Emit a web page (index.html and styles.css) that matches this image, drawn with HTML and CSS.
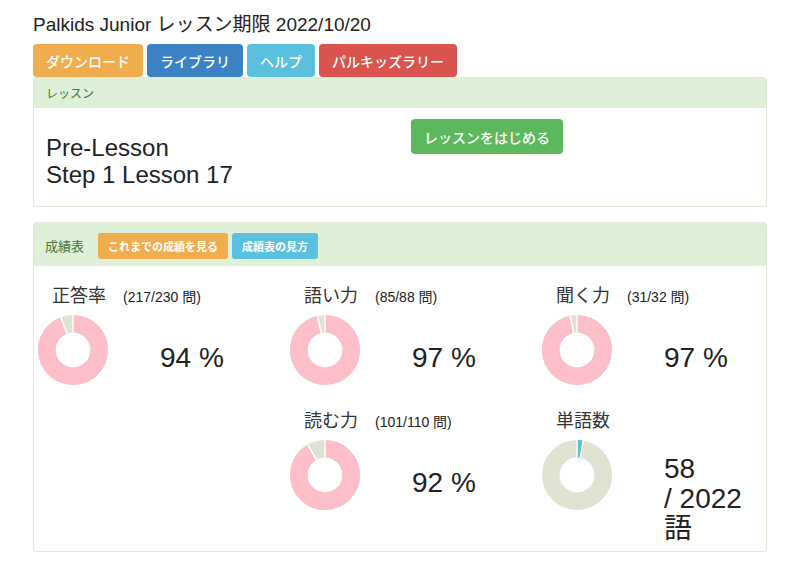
FILE: index.html
```html
<!DOCTYPE html>
<html lang="ja">
<head>
    <meta charset="UTF-8">
    <meta name="viewport" content="width=device-width, initial-scale=1.0">
    <title>Palkids Junior</title>
    <link rel="stylesheet" href="styles.css">
</head>
<body>
    <div class="page">
        <h1 class="title">Palkids Junior レッスン期限 2022/10/20</h1>
        <div class="menu">
            <button class="btn btn-orange">ダウンロード</button>
            <button class="btn btn-blue">ライブラリ</button>
            <button class="btn btn-teal">ヘルプ</button>
            <button class="btn btn-red">パルキッズラリー</button>
        </div>

        <section class="panel">
            <div class="panel-heading">レッスン</div>
            <div class="lesson-body">
                <div class="lesson-name">Pre-Lesson<br>Step 1 Lesson 17</div>
                <div>
                    <button class="btn btn-green">レッスンをはじめる</button>
                </div>
            </div>
        </section>

        <section class="panel score-panel">
            <div class="panel-heading score-heading">
                <span>成績表</span>
                <button class="btn-small btn-orange">これまでの成績を見る</button>
                <button class="btn-small btn-teal">成績表の見方</button>
            </div>
            <div class="score-grid">
                <div class="score">
                    <div class="score-label">正答率<span class="score-count">(217/230 問)</span></div>
                    <div class="score-row">
                        <svg class="donut" viewBox="0 0 70 70" width="70" height="70">
                            <circle class="donut-rest" cx="35" cy="35" r="26.25"/>
                            <circle class="donut-part" cx="35" cy="35" r="26.25" pathLength="100" stroke-dasharray="94.35 100" transform="rotate(-90 35 35)"/>
                            <line class="donut-gap" x1="35" y1="17.5" x2="35" y2="0"/>
                            <line class="donut-gap" x1="28.93" y1="18.59" x2="22.86" y2="2.17"/>
                        </svg>
                        <div class="score-value">94 %</div>
                    </div>
                </div>
                <div class="score">
                    <div class="score-label">語い力<span class="score-count">(85/88 問)</span></div>
                    <div class="score-row">
                        <svg class="donut" viewBox="0 0 70 70" width="70" height="70">
                            <circle class="donut-rest" cx="35" cy="35" r="26.25"/>
                            <circle class="donut-part" cx="35" cy="35" r="26.25" pathLength="100" stroke-dasharray="96.59 100" transform="rotate(-90 35 35)"/>
                            <line class="donut-gap" x1="35" y1="17.5" x2="35" y2="0"/>
                            <line class="donut-gap" x1="31.28" y1="17.9" x2="27.56" y2="0.8"/>
                        </svg>
                        <div class="score-value">97 %</div>
                    </div>
                </div>
                <div class="score">
                    <div class="score-label">聞く力<span class="score-count">(31/32 問)</span></div>
                    <div class="score-row">
                        <svg class="donut" viewBox="0 0 70 70" width="70" height="70">
                            <circle class="donut-rest" cx="35" cy="35" r="26.25"/>
                            <circle class="donut-part" cx="35" cy="35" r="26.25" pathLength="100" stroke-dasharray="96.88 100" transform="rotate(-90 35 35)"/>
                            <line class="donut-gap" x1="35" y1="17.5" x2="35" y2="0"/>
                            <line class="donut-gap" x1="31.59" y1="17.84" x2="28.17" y2="0.67"/>
                        </svg>
                        <div class="score-value">97 %</div>
                    </div>
                </div>

                <div class="score"></div>
                <div class="score">
                    <div class="score-label">読む力<span class="score-count">(101/110 問)</span></div>
                    <div class="score-row">
                        <svg class="donut" viewBox="0 0 70 70" width="70" height="70">
                            <circle class="donut-rest" cx="35" cy="35" r="26.25"/>
                            <circle class="donut-part" cx="35" cy="35" r="26.25" pathLength="100" stroke-dasharray="91.82 100" transform="rotate(-90 35 35)"/>
                            <line class="donut-gap" x1="35" y1="17.5" x2="35" y2="0"/>
                            <line class="donut-gap" x1="26.4" y1="19.76" x2="17.79" y2="4.52"/>
                        </svg>
                        <div class="score-value">92 %</div>
                    </div>
                </div>
                <div class="score">
                    <div class="score-label">単語数</div>
                    <div class="score-row">
                        <svg class="donut donut-words" viewBox="0 0 70 70" width="70" height="70">
                            <circle class="donut-rest" cx="35" cy="35" r="26.25"/>
                            <circle class="donut-part" cx="35" cy="35" r="26.25" pathLength="100" stroke-dasharray="2.87 100" transform="rotate(-90 35 35)"/>
                            <line class="donut-gap" x1="35" y1="17.5" x2="35" y2="0"/>
                            <line class="donut-gap" x1="38.14" y1="17.78" x2="41.28" y2="0.57"/>
                        </svg>
                        <div class="score-value words-value">58<br>/ 2022<br>語</div>
                    </div>
                </div>
            </div>
        </section>
    </div>
</body>
</html>
```

FILE: styles.css
```css
body {
    margin: 0;
    background: #fff;
    color: #333;
    font-family: "Liberation Sans", "Noto Sans CJK JP", sans-serif;
}
.page {
    padding: 14px 33px 0;
}
.title {
    margin: 0 0 8px;
    font-size: 19px;
    line-height: 22px;
    font-weight: normal;
    color: #222;
}
.menu {
    display: flex;
    gap: 4px;
}
.btn {
    height: 33px;
    padding: 0 13px;
    border: none;
    border-radius: 4px;
    color: #fff;
    font-family: "Noto Sans CJK JP", sans-serif;
    font-size: 14px;
    font-weight: 500;
    cursor: pointer;
}
.btn-small {
    height: 26px;
    padding: 0 10px;
    border: none;
    border-radius: 3px;
    color: #fff;
    font-family: "Noto Sans CJK JP", sans-serif;
    font-size: 11px;
    font-weight: bold;
}
.btn-orange { background: #f0ad4e; }
.btn-blue { background: #3b82c4; }
.btn-teal { background: #5bc0de; }
.btn-red { background: #d9534f; }
.btn-green {
    height: 35px;
    background: #5cb85c;
}

.panel {
    border: 1px solid #e2e8d8;
    border-radius: 3px;
    background: #fff;
}
.panel-heading {
    padding: 8px 12px;
    background: #dff0d8;
    color: #3c763d;
    font-family: "Noto Sans CJK JP", sans-serif;
    font-size: 12px;
    line-height: 14px;
}
.lesson-body {
    display: grid;
    grid-template-columns: 365px 1fr;
    padding: 11px 12px 18px;
}
.lesson-name {
    margin-top: 15px;
    font-size: 24px;
    line-height: 27px;
    color: #222;
}

.score-panel {
    margin-top: 15px;
}
.score-heading {
    display: flex;
    align-items: center;
    gap: 4px;
    padding: 10px 11px 7px;
    font-size: 13px;
}
.score-heading span {
    margin-right: 10px;
}
.score-grid {
    display: grid;
    grid-template-columns: 252px 252px 1fr;
    padding: 16px 0 7px 4px;
}
.score-label {
    display: flex;
    align-items: baseline;
    padding-left: 14px;
    height: 24px;
    margin-bottom: 9px;
    font-family: "Noto Sans CJK JP", sans-serif;
    font-size: 18px;
    line-height: 24px;
    color: #333;
}
.score-count {
    margin-left: 17px;
    font-family: "Liberation Sans", "Noto Sans CJK JP", sans-serif;
    font-size: 14px;
    color: #222;
}
.score-row {
    display: flex;
    align-items: flex-start;
    margin-bottom: 22px;
}
.donut {
    display: block;
    flex: none;
}
.donut circle {
    fill: none;
    stroke-width: 17.5;
}
.donut-rest { stroke: #dfe3d1; }
.donut-part { stroke: #fcbfca; }
.donut-words .donut-part { stroke: #56c6cf; }
.donut-gap {
    stroke: #fff;
    stroke-width: 1.5;
}
.score-value {
    margin: 28px 0 0 52px;
    font-size: 28px;
    line-height: 30px;
    color: #222;
}
.words-value {
    margin-top: 14px;
}
.score:last-child .score-row {
    margin-bottom: 0;
}
```
